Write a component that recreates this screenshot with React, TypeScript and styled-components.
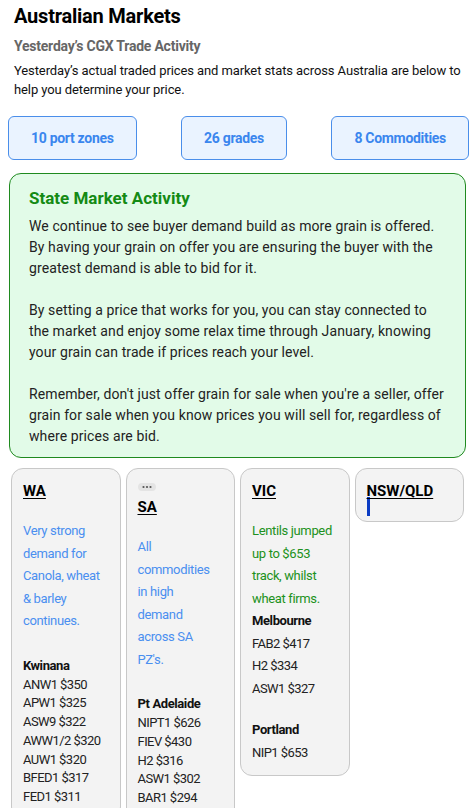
import styled, { createGlobalStyle } from "styled-components";

type Market = {
  name: string;
  prices: string[];
};

type State = {
  code: string;
  note?: string;
  noteWidth?: number;
  tone?: "blue" | "green";
  dots?: boolean;
  roomy?: boolean;
  caret?: boolean;
  markets: Market[];
};

const states: State[] = [
  {
    code: "WA",
    note: "Very strong demand for Canola, wheat & barley continues.",
    tone: "blue",
    markets: [
      {
        name: "Kwinana",
        prices: [
          "ANW1 $350",
          "APW1 $325",
          "ASW9 $322",
          "AWW1/2 $320",
          "AUW1 $320",
          "BFED1 $317",
          "FED1 $311",
        ],
      },
    ],
  },
  {
    code: "SA",
    dots: true,
    note: "All commodities in high demand across SA PZ's.",
    noteWidth: 72,
    tone: "blue",
    markets: [
      {
        name: "Pt Adelaide",
        prices: ["NIPT1 $626", "FIEV $430", "H2 $316", "ASW1 $302", "BAR1 $294"],
      },
    ],
  },
  {
    code: "VIC",
    note: "Lentils jumped up to $653 track, whilst wheat firms.",
    tone: "green",
    roomy: true,
    markets: [
      { name: "Melbourne", prices: ["FAB2 $417", "H2 $334", "ASW1 $327"] },
      { name: "Portland", prices: ["NIP1 $653"] },
    ],
  },
  { code: "NSW/QLD", caret: true, markets: [] },
];

const stats = ["10 port zones", "26 grades", "8 Commodities"];

export default function App() {
  return (
    <>
      <GlobalStyle />
      <Page>
        <Header>
          <Title>Australian Markets</Title>
          <Subtitle>Yesterday’s CGX Trade Activity</Subtitle>
          <Intro>
            Yesterday’s actual traded prices and market stats across Australia
            are below to help you determine your price.
          </Intro>
        </Header>

        <StatRow>
          {stats.map((s) => (
            <StatButton key={s}>{s}</StatButton>
          ))}
        </StatRow>

        <ActivityBox>
          <ActivityTitle>State Market Activity</ActivityTitle>
          <ActivityText>
            We continue to see buyer demand build as more grain is offered. By
            having your grain on offer you are ensuring the buyer with the
            greatest demand is able to bid for it.
          </ActivityText>
          <ActivityText>
            By setting a price that works for you, you can stay connected to
            the market and enjoy some relax time through January, knowing your
            grain can trade if prices reach your level.
          </ActivityText>
          <ActivityText>
            Remember, don't just offer grain for sale when you're a seller,
            offer grain for sale when you know prices you will sell for,
            regardless of where prices are bid.
          </ActivityText>
        </ActivityBox>

        <StateGrid>
          {states.map((st) => (
            <StateCard key={st.code}>
              {st.dots && (
                <Dots>
                  <svg width="10" height="4" viewBox="0 0 10 4">
                    <circle cx="1.5" cy="2" r="1.1" fill="#555" />
                    <circle cx="5" cy="2" r="1.1" fill="#555" />
                    <circle cx="8.5" cy="2" r="1.1" fill="#555" />
                  </svg>
                </Dots>
              )}
              <StateCode>{st.code}</StateCode>
              {st.caret && <Caret />}
              {st.note && (
                <Note $tone={st.tone ?? "blue"} $width={st.noteWidth}>
                  {st.note}
                </Note>
              )}
              {st.markets.map((m) => (
                <MarketBlock key={m.name} $roomy={!!st.roomy}>
                  <MarketName $roomy={!!st.roomy}>{m.name}</MarketName>
                  {m.prices.map((p) => (
                    <Price key={p} $roomy={!!st.roomy}>
                      {p}
                    </Price>
                  ))}
                </MarketBlock>
              ))}
            </StateCard>
          ))}
        </StateGrid>
      </Page>
    </>
  );
}

const GlobalStyle = createGlobalStyle`
  body {
    margin: 0;
    background: #ffffff;
    font-family: Roboto, "Noto Sans", Arial, sans-serif;
    color: #222222;
  }
`;

const Page = styled.div`
  padding: 0 3px 0 8px;
`;

const Header = styled.div`
  padding: 4px 6px 0;
`;

const Title = styled.h1`
  margin: 0;
  font-size: 20px;
  line-height: 24px;
  font-weight: 700;
  letter-spacing: -0.22px;
  color: #000000;
`;

const Subtitle = styled.h2`
  margin: 9px 0 0;
  font-size: 14px;
  line-height: 18px;
  font-weight: 700;
  letter-spacing: -0.23px;
  color: #666666;
`;

const Intro = styled.p`
  margin: 6px 0 0;
  font-size: 13px;
  line-height: 19px;
  letter-spacing: -0.1px;
  color: #111111;
`;

const StatRow = styled.div`
  display: flex;
  justify-content: space-between;
  margin-top: 17px;
`;

const StatButton = styled.div`
  height: 44px;
  box-sizing: border-box;
  display: flex;
  align-items: center;
  padding: 0 22px;
  border: 1px solid #4a8eea;
  border-radius: 6px;
  background: #eaf3ff;
  color: #3a86ee;
  font-size: 14px;
  font-weight: 700;
  letter-spacing: -0.3px;
`;

const ActivityBox = styled.div`
  margin: 13px 3px 0 1px;
  padding: 12px 19px 10px;
  border: 1px solid #1f8a1f;
  border-radius: 12px;
  background: #e2fbe8;
`;

const ActivityTitle = styled.h3`
  margin: 0 0 6px;
  font-size: 17px;
  line-height: 24px;
  font-weight: 700;
  color: #148a14;
`;

const ActivityText = styled.p`
  margin: 0 0 21px;
  font-size: 14px;
  line-height: 21px;
  letter-spacing: 0.1px;
  color: #222222;

  &:last-child {
    margin-bottom: 0;
  }
`;

const StateGrid = styled.div`
  display: grid;
  grid-template-columns: repeat(4, 1fr);
  gap: 5px;
  align-items: start;
  margin: 10px 5px 0 3px;
`;

const StateCard = styled.div`
  padding: 11px 11px;
  border: 1px solid #c8c8c8;
  border-radius: 12px;
  background: #f3f3f3;
  min-width: 0;
`;

const Dots = styled.div`
  display: flex;
  align-items: center;
  justify-content: center;
  width: 18px;
  height: 8px;
  margin: 3px 0 5px;
  border-radius: 4px;
  background: #e4e4e4;
`;

const StateCode = styled.div`
  font-size: 15px;
  line-height: 22px;
  font-weight: 700;
  color: #000000;
  text-decoration: underline;
  text-underline-offset: 2px;
`;

const Caret = styled.div`
  width: 3px;
  height: 19px;
  margin: -5px 0 -6px;
  background: #0b3cc4;
`;

const Note = styled.p<{ $tone: "blue" | "green"; $width?: number }>`
  margin: 18px 0 0;
  max-width: ${({ $width }) => ($width ? `${$width}px` : "none")};
  font-size: 13px;
  line-height: 22.5px;
  letter-spacing: -0.35px;
  color: ${({ $tone }) => ($tone === "green" ? "#1c9120" : "#4a8ff0")};
`;

const MarketBlock = styled.div<{ $roomy: boolean }>`
  margin-top: ${({ $roomy }) => ($roomy ? "0" : "22px")};

  & + & {
    margin-top: 19px;
  }
`;

const MarketName = styled.div<{ $roomy: boolean }>`
  font-size: 13px;
  line-height: ${({ $roomy }) => ($roomy ? "22.5px" : "21px")};
  font-weight: 700;
  letter-spacing: -0.4px;
  color: #111111;
`;

const Price = styled.div<{ $roomy: boolean }>`
  font-size: 13px;
  line-height: ${({ $roomy }) => ($roomy ? "22.5px" : "18.8px")};
  letter-spacing: -0.55px;
  color: #222222;
`;
